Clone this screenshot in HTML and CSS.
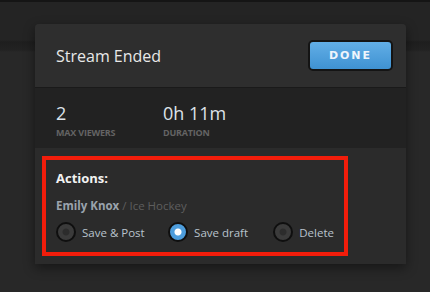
FILE: index.html
```html
<!DOCTYPE html>
<html lang="en">
  <head>
    <meta charset="UTF-8" />
    <title>Stream Ended</title>
    <link rel="stylesheet" href="styles.css">
  </head>
  <body>
    <div class="panel">
      <div class="panel-header">
        <h1>Stream Ended</h1>
        <button class="btn-done">DONE</button>
      </div>
      <div class="stats">
        <div class="stat">
          <div class="stat-value">2</div>
          <div class="stat-label">Max Viewers</div>
        </div>
        <div class="stat">
          <div class="stat-value">0h 11m</div>
          <div class="stat-label">Duration</div>
        </div>
      </div>
      <div class="actions-wrap">
        <div class="actions">
          <h2>Actions:</h2>
          <p class="meta"><b>Emily Knox</b> / Ice Hockey</p>
          <div class="options">
            <label class="option"><span class="radio"></span>Save &amp; Post</label>
            <label class="option"><span class="radio checked"></span>Save draft</label>
            <label class="option"><span class="radio"></span>Delete</label>
          </div>
        </div>
      </div>
    </div>
  </body>
</html>
```

FILE: styles.css
```css
* {
  box-sizing: border-box;
  margin: 0;
  padding: 0;
}

body {
  font-family: "Open Sans", "DejaVu Sans", sans-serif;
  background: linear-gradient(
    #151515 0,
    #151515 2px,
    #242424 2px,
    #242424 40px,
    #1e1e1e 42px,
    #222222 50px,
    #282828 52px,
    #282828 100%
  );
  height: 292px;
  overflow: hidden;
  padding: 24px 0 0 35px;
}

.panel {
  width: 371px;
  background: #2b2b2b;
  border-radius: 4px 4px 0 0;
  box-shadow: 0 4px 12px rgba(0, 0, 0, 0.45);
}

.panel-header {
  height: 64px;
  display: flex;
  justify-content: space-between;
  align-items: center;
  padding: 0 13px 0 21px;
  background: #2e2e2e;
  border-bottom: 1px solid #1a1a1a;
  border-radius: 4px 4px 0 0;
}

h1 {
  font-size: 16px;
  font-weight: 400;
  color: #e8e8e8;
}

.btn-done {
  width: 85px;
  height: 31px;
  border: 2px solid #141414;
  border-radius: 5px;
  background: linear-gradient(#62aee6, #3f92d2);
  color: #eef5fc;
  font-family: "DejaVu Sans", sans-serif;
  font-size: 11px;
  font-weight: 700;
  letter-spacing: 2px;
}

.stats {
  height: 60px;
  display: flex;
  padding: 14px 0 0 21px;
  background: #222222;
}

.stat {
  width: 107px;
}

.stat-value {
  font-size: 18px;
  line-height: 22px;
  color: #dde3ea;
}

.stat-label {
  margin-top: 2px;
  font-size: 9px;
  font-weight: 700;
  text-transform: uppercase;
  letter-spacing: -0.2px;
  color: #646464;
}

.actions-wrap {
  padding: 8px 58px 8px 7px;
}

.actions {
  height: 100px;
  border: 4px solid #f21d0b;
  padding: 9px 10px 0;
}

h2 {
  font-size: 13px;
  font-weight: 700;
  color: #f2f2f2;
}

.meta {
  margin-top: 11px;
  font-size: 11.5px;
  color: #5e5e5e;
}

.meta b {
  color: #9aa3ad;
}

.options {
  display: flex;
  margin-top: 9px;
}

.option {
  display: flex;
  align-items: center;
  gap: 6px;
  font-size: 11.5px;
  color: #b9c3cd;
}

.option:nth-child(1) {
  width: 113px;
}

.option:nth-child(2) {
  width: 106px;
}

.radio {
  width: 20px;
  height: 20px;
  border-radius: 50%;
  border: 2px solid #0f0f0f;
  background: radial-gradient(circle, #2c2c2c 0 3px, #3b3b3b 4px);
}

.radio.checked {
  background: radial-gradient(circle, #ffffff 0 3px, #4d9ddc 4px);
}
```
